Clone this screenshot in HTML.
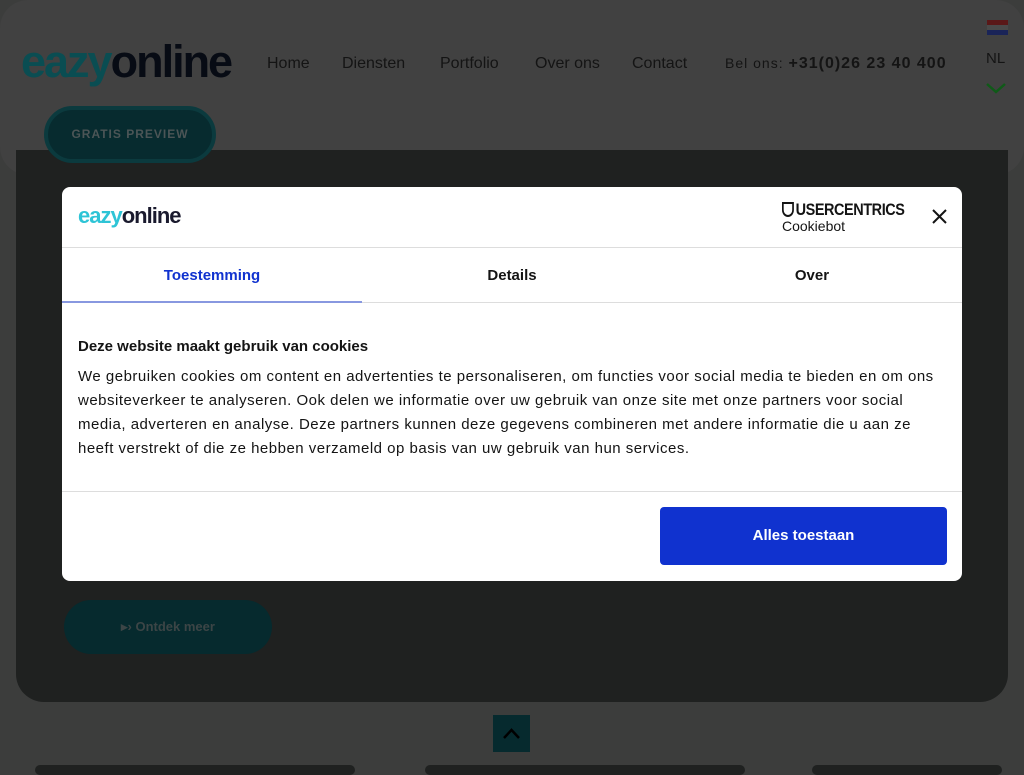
<!DOCTYPE html>
<html><head><meta charset="utf-8"><style>
*{box-sizing:border-box;margin:0;padding:0}
body{width:1024px;height:768px;overflow:hidden;background:#3c3d3c;font-family:"Liberation Sans",sans-serif;position:relative}
.hdr{position:absolute;left:0;top:0;width:1024px;height:175px;background:#414141;border-radius:28px}
.card{position:absolute;left:16px;top:150px;width:992px;height:552px;background:#1f2120;border-radius:0 0 28px 28px}
.logo{position:absolute;left:21px;top:36px;font-size:45px;font-weight:bold;letter-spacing:-2px}
.nav{position:absolute;top:55px;font-size:16px;color:#141414}
.gp{position:absolute;left:44px;top:106px;width:172px;height:57px;border-radius:29px;background:#072b2f;border:4px solid #0b3a3e;color:#4c5556;font-size:12px;font-weight:bold;letter-spacing:1px;text-align:center;line-height:49px}
.dlg{position:absolute;left:62px;top:187px;width:900px;height:394px;background:#fff;border-radius:8px}
.tab{position:absolute;top:80px;font-size:15px;font-weight:bold;width:300px;text-align:center}
</style></head><body>
<div class="hdr"></div>
<div class="card"></div>
<div class="logo"><span style="color:#0a4d52">eazy</span><span style="color:#070b14">online</span></div>
<div class="nav" style="left:267px">Home</div>
<div class="nav" style="left:342px">Diensten</div>
<div class="nav" style="left:440px">Portfolio</div>
<div class="nav" style="left:535px">Over ons</div>
<div class="nav" style="left:632px">Contact</div>
<div class="nav" style="left:725px;top:55px;font-size:14px;letter-spacing:1px">Bel ons: <b style="font-size:16px">+31(0)26 23 40 400</b></div>
<div style="position:absolute;left:987px;top:20px;width:21px;height:5px;background:#5a1818"></div>
<div style="position:absolute;left:987px;top:25px;width:21px;height:5px;background:#4a4a4a"></div>
<div style="position:absolute;left:987px;top:30px;width:21px;height:5px;background:#1a2458"></div>
<div style="position:absolute;left:986px;top:50px;font-size:15px;color:#141414">NL</div>
<svg style="position:absolute;left:985px;top:81px" width="22" height="14"><path d="M2 3 L11 11 L20 3" stroke="#0f5a18" stroke-width="2.5" fill="none"/></svg>
<div class="gp">GRATIS PREVIEW</div>
<div style="position:absolute;left:64px;top:600px;width:208px;height:54px;border-radius:27px;background:#062a2e;color:#3c4546;font-size:13px;font-weight:bold;text-align:center;line-height:54px">▸› Ontdek meer</div>
<div style="position:absolute;left:493px;top:715px;width:37px;height:37px;background:#062a2e"><svg width="37" height="37"><path d="M11 23 L18.5 15 L26 23" stroke="#000" stroke-width="2.5" fill="none"/></svg></div>
<div style="position:absolute;left:35px;top:765px;width:320px;height:10px;background:#1f2120;border-radius:8px"></div>
<div style="position:absolute;left:425px;top:765px;width:320px;height:10px;background:#1f2120;border-radius:8px"></div>
<div style="position:absolute;left:812px;top:765px;width:190px;height:10px;background:#1f2120;border-radius:8px"></div>
<div class="dlg">
<div style="position:absolute;left:16px;top:16px;font-size:22px;font-weight:bold;letter-spacing:-1px"><span style="color:#2ec4d6">eazy</span><span style="color:#1a1a2e">online</span></div>
<div style="position:absolute;left:720px;top:13px;font-size:17px;font-weight:bold;color:#141414;letter-spacing:-0.5px;transform:scaleX(0.85);transform-origin:left"><span style="display:inline-block;width:14px;height:15px;border:2.5px solid #141414;border-radius:0 0 7px 7px;vertical-align:-2px;margin-right:2px"></span>USERCENTRICS</div>
<div style="position:absolute;left:720px;top:31px;font-size:14px;color:#141414">Cookiebot</div>
<svg style="position:absolute;left:870px;top:22px" width="15" height="15"><path d="M1 1L14 14M14 1L1 14" stroke="#141414" stroke-width="2"/></svg>
<div style="position:absolute;left:0;top:60px;width:900px;height:1px;background:#ddd"></div>
<div class="tab" style="left:0;color:#1032cf">Toestemming</div>
<div class="tab" style="left:300px;color:#141414">Details</div>
<div class="tab" style="left:600px;color:#141414">Over</div>
<div style="position:absolute;left:0;top:114px;width:300px;height:2px;background:#8898e0"></div>
<div style="position:absolute;left:300px;top:115px;width:600px;height:1px;background:#ddd"></div>
<div style="position:absolute;left:16px;top:151px;font-size:15px;font-weight:bold;color:#141414">Deze website maakt gebruik van cookies</div>
<div style="position:absolute;left:16px;top:178px;width:870px;font-size:15px;line-height:24px;color:#141414;letter-spacing:0.5px">We gebruiken cookies om content en advertenties te personaliseren, om functies voor social media te bieden en om ons websiteverkeer te analyseren. Ook delen we informatie over uw gebruik van onze site met onze partners voor social media, adverteren en analyse. Deze partners kunnen deze gegevens combineren met andere informatie die u aan ze heeft verstrekt of die ze hebben verzameld op basis van uw gebruik van hun services.</div>
<div style="position:absolute;left:0;top:304px;width:900px;height:1px;background:#ddd"></div>
<div style="position:absolute;left:598px;top:320px;width:287px;height:58px;background:#1032cf;border-radius:4px;color:#fff;font-size:15px;font-weight:bold;text-align:center;line-height:58px">Alles toestaan</div>
</div>
</body></html>
